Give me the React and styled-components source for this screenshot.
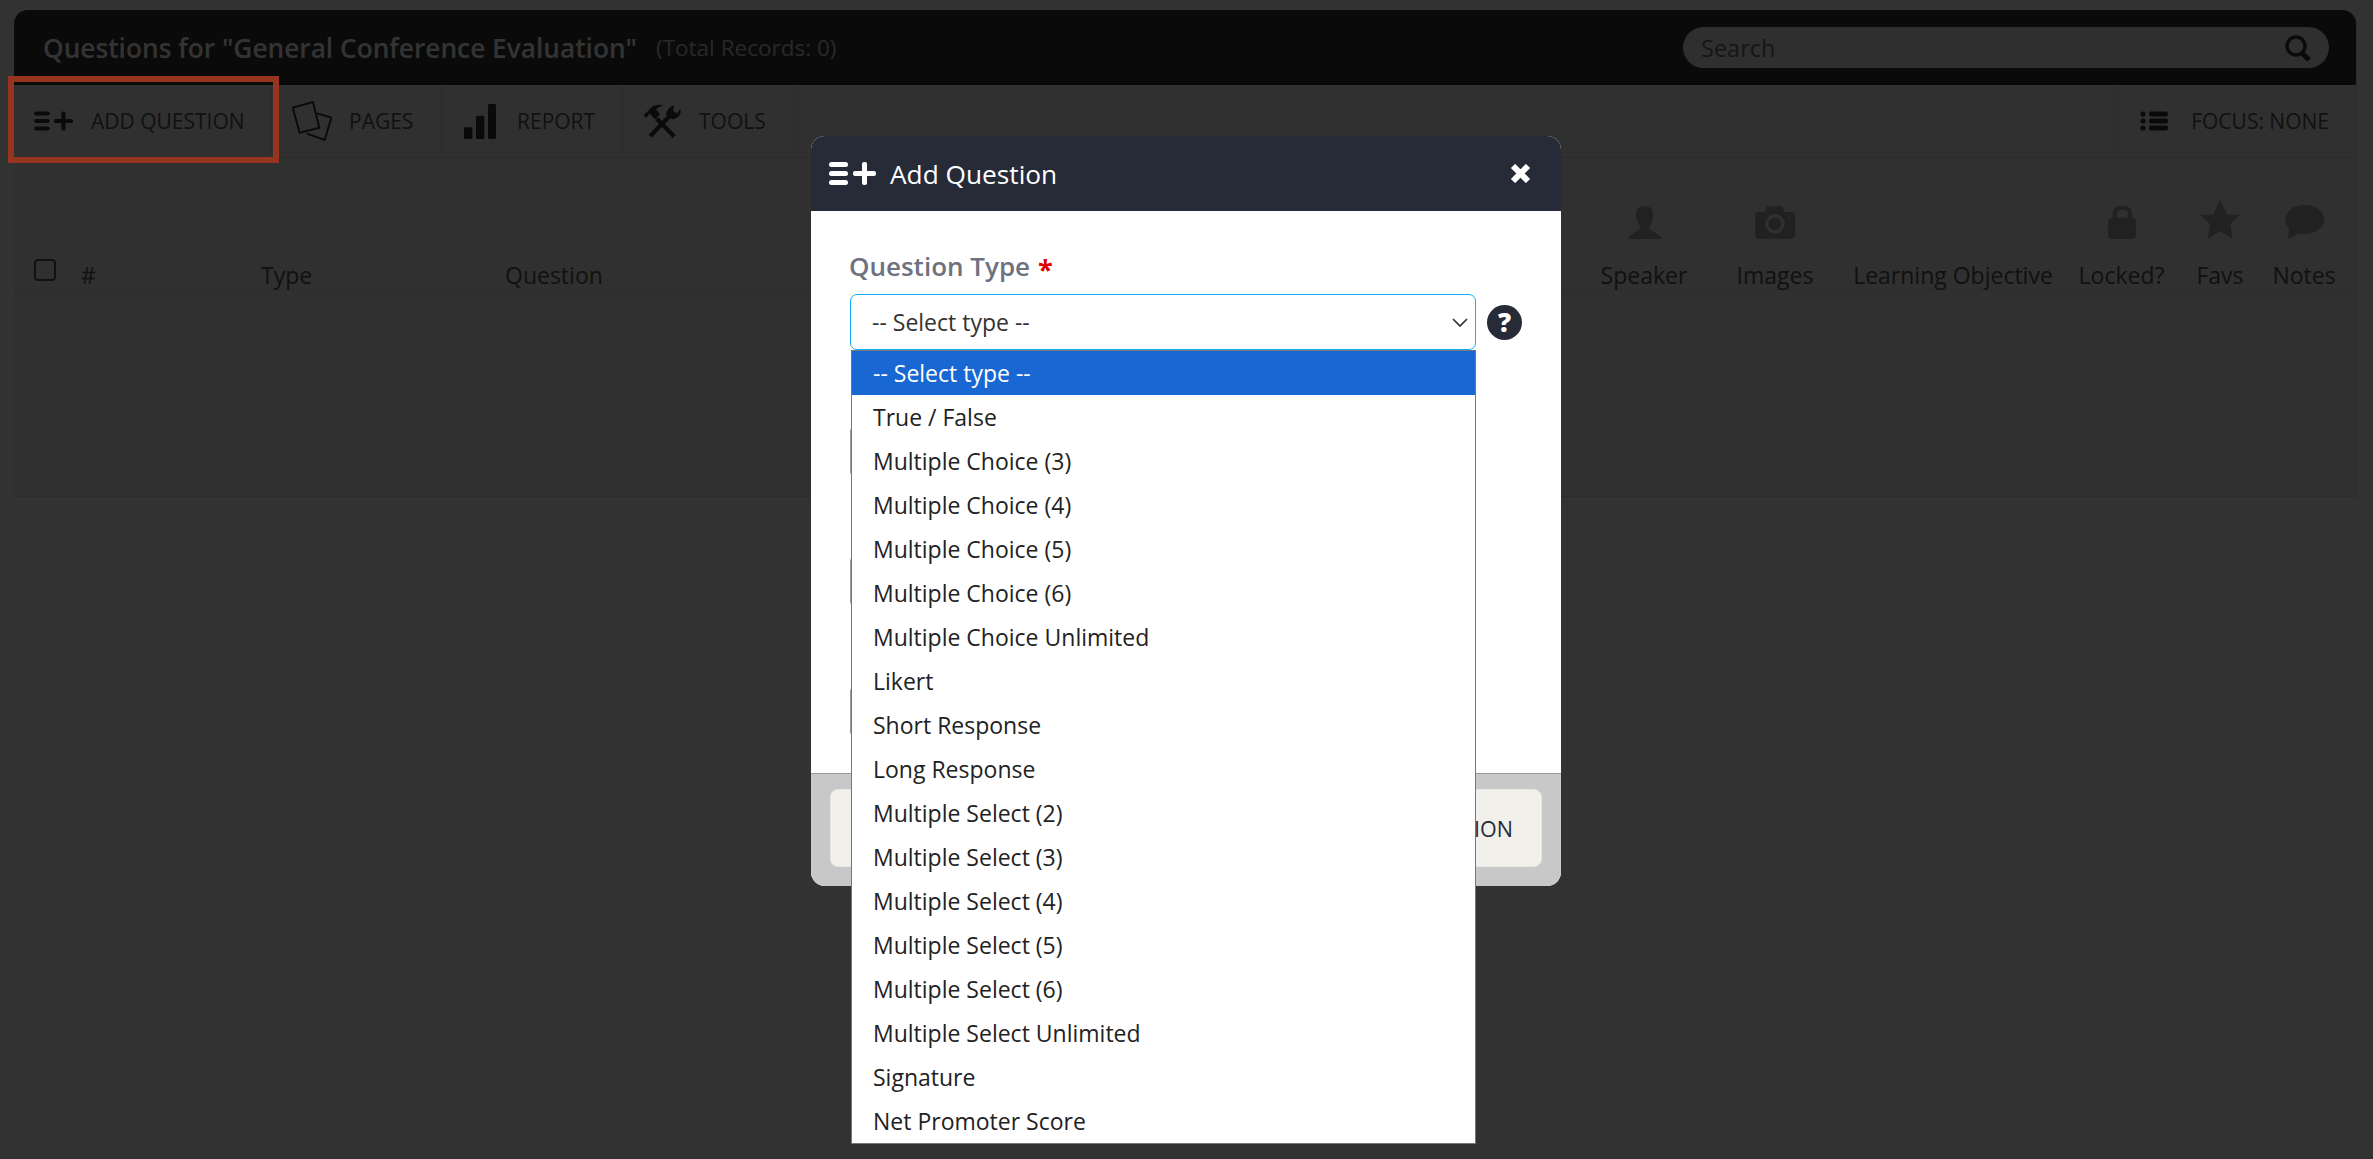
import React from 'react';
import styled, { createGlobalStyle } from 'styled-components';

const OPTIONS = [
  '-- Select type --',
  'True / False',
  'Multiple Choice (3)',
  'Multiple Choice (4)',
  'Multiple Choice (5)',
  'Multiple Choice (6)',
  'Multiple Choice Unlimited',
  'Likert',
  'Short Response',
  'Long Response',
  'Multiple Select (2)',
  'Multiple Select (3)',
  'Multiple Select (4)',
  'Multiple Select (5)',
  'Multiple Select (6)',
  'Multiple Select Unlimited',
  'Signature',
  'Net Promoter Score',
];

const GlobalStyle = createGlobalStyle`
  html, body {
    margin: 0;
    background: #fafafa;
    font-family: "Open Sans", "Liberation Sans", sans-serif;
  }
  * { box-sizing: border-box; }
`;

const Page = styled.div`
  min-height: 100vh;
  padding: 10px 16px 0 14px;
`;

const Panel = styled.div`
  height: 487px;
  background: #eeeeee;
  border-radius: 14px 14px 0 0;
  border-right: 1px solid #dcdcdc;
  border-bottom: 1px solid #dcdcdc;
`;

const PanelHeader = styled.header`
  height: 75px;
  display: flex;
  align-items: center;
  padding: 0 27px 0 29px;
  background: #323232;
  border-radius: 14px 14px 0 0;
`;

const Title = styled.h1`
  margin: 0;
  font-size: 26.25px;
  font-weight: 600;
  color: #fff;
`;

const RecordCount = styled.span`
  margin-left: 19px;
  font-size: 22.5px;
  color: #c8c8c8;
`;

const SearchBox = styled.div`
  margin-left: auto;
  width: 646px;
  height: 41px;
  display: flex;
  align-items: center;
  background: #e8e8e8;
  border-radius: 21px;
`;

const SearchText = styled.span`
  flex: 1;
  padding-left: 18px;
  font-size: 23.5px;
  color: #707070;
`;

const SearchButton = styled.span`
  width: 64px;
  height: 100%;
  display: flex;
  align-items: center;
  justify-content: center;
  border-left: 1px solid #dedede;
`;

const Toolbar = styled.nav`
  height: 73px;
  display: flex;
  border-bottom: 1px solid #d8d8d8;
`;

const ToolItem = styled.div`
  width: ${(p) => p.$width}px;
  display: flex;
  align-items: center;
  gap: 17px;
  padding-left: 20px;
  border-right: 1px solid #dcdcdc;
  font-size: 21px;
  color: #555;
`;

const FocusItem = styled(ToolItem)`
  width: auto;
  margin-left: auto;
  gap: 23px;
  padding: 0 27px 0 25px;
  border-right: 0;
  border-left: 1px solid #dcdcdc;
`;

const Icon = styled.svg`
  display: block;
  flex: none;
  margin: ${(p) => p.$margin || '0'};
`;

const ToolIcon = styled(Icon)`
  color: #333;
`;

// call-out drawn over the screenshot, above the dimmed layer
const Highlight = styled.div`
  position: fixed;
  left: 8px;
  top: 76px;
  width: 271px;
  height: 87px;
  border: 6px solid #96341f;
`;

const TableHead = styled.div`
  height: 132px;
  display: flex;
  padding-right: 10px;
  border-bottom: 1px solid #dcdcdc;
`;

const HeadCell = styled.div`
  flex: ${(p) => (p.$width ? 'none' : '1')};
  width: ${(p) => (p.$width ? `${p.$width}px` : 'auto')};
  display: flex;
  flex-direction: column;
  justify-content: flex-end;
  align-items: ${(p) => (p.$center ? 'center' : 'flex-start')};
  font-size: 23px;
  line-height: 28px;
  color: #555;
  white-space: nowrap;
`;

const HeadIcon = styled.svg`
  display: block;
  margin-bottom: 22px;
  color: #a4a4a4;
`;

const CheckBox = styled.span`
  width: 22px;
  height: 22px;
  margin: 0 0 8px 20px;
  border: 2px solid #555;
  border-radius: 4px;
`;

const Overlay = styled.div`
  position: fixed;
  inset: 0;
  display: flex;
  justify-content: center;
  align-items: flex-start;
  padding: 136px 1px 0 0;
  background: rgba(0, 0, 0, 0.8);
`;

const Modal = styled.section`
  width: 750px;
  border-radius: 14px;
  background: #fff;
`;

const ModalHeader = styled.header`
  height: 75px;
  display: flex;
  align-items: center;
  padding: 0 30px 0 18px;
  background: #272b38;
  border-radius: 14px 14px 0 0;
  color: #fff;
`;

const ModalTitle = styled.h2`
  margin: 0 0 0 14px;
  font-size: 26.25px;
  font-weight: 400;
`;

const CloseIcon = styled(Icon)`
  margin-left: auto;
`;

const ModalBody = styled.div`
  padding: 39px 39px 37px;
`;

const FieldLabel = styled.div`
  margin: 0 0 12px -1px;
  font-size: 26px;
  line-height: 32px;
  font-weight: 600;
  color: #6d7280;
`;

const Required = styled.span`
  margin-left: 8px;
  font-size: 27px;
  font-weight: 700;
  line-height: 0;
  vertical-align: -3px;
  color: #e00000;
`;

const SelectRow = styled.div`
  display: flex;
  align-items: center;
  gap: 11px;
`;

const SelectWrap = styled.div`
  position: relative;
  width: 627px;
`;

const SelectBox = styled.div`
  height: 56px;
  display: flex;
  align-items: center;
  justify-content: space-between;
  padding: 0 7px 0 21px;
  border: 1px solid #14b0f5;
  border-radius: 7px;
  font-size: 23px;
  color: #333;
`;

const OptionList = styled.ul`
  position: absolute;
  z-index: 2;
  top: 100%;
  left: 1px;
  right: 0;
  margin: 0;
  padding: 0;
  list-style: none;
  background: #fff;
  border: 1px solid #767676;
`;

const Option = styled.li`
  height: 44px;
  padding-left: 21px;
  font-size: 23px;
  line-height: 45px;
  color: ${(p) => (p.$selected ? '#fff' : '#222')};
  background: ${(p) => (p.$selected ? '#1967d2' : 'transparent')};
`;

const HelpBadge = styled.span`
  width: 35px;
  height: 35px;
  flex: none;
  display: flex;
  align-items: center;
  justify-content: center;
  border-radius: 50%;
  background: #272b38;
  color: #fff;
  font-size: 26px;
  font-weight: 800;
`;

const FieldList = styled.div`
  display: flex;
  flex-direction: column;
  gap: 81px;
  margin-top: 77px;
`;

const TextField = styled.div`
  height: 49px;
  width: 620px;
  border: 1px solid #999;
  border-radius: 4px;
`;

const ModalFooter = styled.footer`
  display: flex;
  justify-content: space-between;
  padding: 15px 19px 19px;
  background: #c8c8c8;
  border-top: 1px solid #9a9a9a;
  border-radius: 0 0 14px 14px;
`;

const FooterButton = styled.button`
  height: 78px;
  min-width: 140px;
  padding: 1px 28px 0;
  border: 1px solid #e6e6e2;
  border-radius: 8px;
  background: #f1f0eb;
  font-family: inherit;
  font-size: 21.5px;
  color: #272b38;
`;

const ListPlusIcon = ({ width, height, margin }) => (
  <Icon $margin={margin} width={width} height={height} viewBox="0 0 47 23" fill="currentColor">
    <rect x="0" y="0" width="19" height="5" rx="2.5" />
    <rect x="0" y="9" width="19" height="5" rx="2.5" />
    <rect x="0" y="18" width="19" height="5" rx="2.5" />
    <rect x="24" y="9" width="23" height="5" rx="2" />
    <rect x="33" y="0" width="5" height="23" rx="2" />
  </Icon>
);

const AddQuestionIcon = styled.span`
  display: block;
  margin-right: 1px;
  color: #333;
`;

const App = () => (
  <>
    <GlobalStyle />
    <Page>
      <Panel>
        <PanelHeader>
          <Title>Questions for "General Conference Evaluation"</Title>
          <RecordCount>(Total Records: 0)</RecordCount>
          <SearchBox>
            <SearchText>Search</SearchText>
            <SearchButton>
              <svg width="28" height="26" viewBox="0 0 28 26" fill="none" stroke="#333">
                <circle cx="12" cy="11" r="9" strokeWidth="3.5" />
                <path d="M18 18 L25 25" strokeWidth="5" />
              </svg>
            </SearchButton>
          </SearchBox>
        </PanelHeader>

        <Toolbar>
          <ToolItem $width={258}>
            <AddQuestionIcon>
              <ListPlusIcon width={39} height={20} />
            </AddQuestionIcon>
            ADD QUESTION
          </ToolItem>
          <ToolItem $width={170}>
            <ToolIcon width="40" height="40" viewBox="35 35 120 120" fill="none" stroke="currentColor" strokeWidth="6">
              <path d="M37 55 L98 38 L117 115 L58 130 Z" />
              <path d="M110 72 L153 85 L133 152 L80 133" />
            </ToolIcon>
            PAGES
          </ToolItem>
          <ToolItem $width={181}>
            <ToolIcon $margin="0 4px 0 2px" width="32" height="35" viewBox="552 43 96 105" fill="currentColor">
              <rect x="552" y="113" width="25" height="35" rx="4" />
              <rect x="588" y="78" width="25" height="70" rx="4" />
              <rect x="624" y="43" width="24" height="105" rx="4" />
            </ToolIcon>
            REPORT
          </ToolItem>
          <ToolItem $width={172}>
            <ToolIcon width="39" height="37" viewBox="1088 42 120 110" fill="currentColor">
              <path d="M1130 88 L1184 143" stroke="currentColor" strokeWidth="13" />
              <path d="M1090 78 L1118 50 Q1135 42 1150 47 L1128 58 L1140 75 L1125 90 L1108 72 L1098 86 Z" />
              <path d="M1110 142 L1170 80" stroke="currentColor" strokeWidth="13" />
              <path d="M1160 80 C1158 62 1170 52 1185 47 L1180 62 L1192 72 L1203 58 C1208 75 1195 90 1178 90 Z" />
            </ToolIcon>
            TOOLS
          </ToolItem>
          <FocusItem>
            <ToolIcon width="28" height="20" viewBox="0 0 28 20" fill="currentColor">
              <circle cx="3" cy="3" r="2.6" />
              <circle cx="3" cy="10" r="2.6" />
              <circle cx="3" cy="17" r="2.6" />
              <rect x="9" y="0.5" width="19" height="5" rx="2" />
              <rect x="9" y="7.5" width="19" height="5" rx="2" />
              <rect x="9" y="14.5" width="19" height="5" rx="2" />
            </ToolIcon>
            FOCUS: NONE
          </FocusItem>
        </Toolbar>

        <TableHead>
          <HeadCell $width={67}>
            <CheckBox />
          </HeadCell>
          <HeadCell $width={180}>#</HeadCell>
          <HeadCell $width={244}>Type</HeadCell>
          <HeadCell>Question</HeadCell>
          <HeadCell $width={130} $center>
            <HeadIcon width="35" height="33" viewBox="22 35 103 100" fill="currentColor">
              <path d="M22 135 C28 118 55 112 62 100 C52 88 48 75 48 60 C48 45 58 35 74 35 C90 35 100 45 100 60 C100 75 96 88 86 100 C93 112 118 118 125 135 Z" />
            </HeadIcon>
            Speaker
          </HeadCell>
          <HeadCell $width={132} $center>
            <HeadIcon width="40" height="33" viewBox="408 36 119 96">
              <path fill="currentColor" d="M437 53 L444 36 L490 36 L497 53 L515 53 Q527 53 527 65 L527 120 Q527 132 515 132 L420 132 Q408 132 408 120 L408 65 Q408 53 420 53 Z" />
              <circle cx="467" cy="88" r="24" fill="none" stroke="#eeeeee" strokeWidth="10" />
              <circle cx="510" cy="70" r="3" fill="#eeeeee" />
            </HeadIcon>
            Images
          </HeadCell>
          <HeadCell $width={224} $center>Learning Objective</HeadCell>
          <HeadCell $width={113} $center>
            <HeadIcon width="28" height="33" viewBox="55 37 83 98">
              <path fill="none" stroke="currentColor" strokeWidth="13" d="M75 80 L75 60 C75 35 120 35 120 60 L120 80" />
              <rect x="55" y="72" width="83" height="63" rx="11" fill="currentColor" />
            </HeadIcon>
            Locked?
          </HeadCell>
          <HeadCell $width={84} $center>
            <HeadIcon width="40" height="39" viewBox="333 18 120 117" fill="currentColor">
              <polygon points="393,18 415,62 453,62 424,90 431,135 393,112 357,135 363,90 333,62 372,62" />
            </HeadIcon>
            Favs
          </HeadCell>
          <HeadCell $width={84} $center>
            <HeadIcon width="39" height="34" viewBox="588 32 117 103" fill="currentColor">
              <ellipse cx="647" cy="76" rx="59" ry="44" />
              <path d="M600 95 L597 135 L640 112 Z" />
            </HeadIcon>
            Notes
          </HeadCell>
        </TableHead>
      </Panel>
    </Page>

    <Overlay>
      <Modal>
        <ModalHeader>
          <ListPlusIcon width={47} height={23} />
          <ModalTitle>Add Question</ModalTitle>
          <CloseIcon width="21" height="19" viewBox="0 0 21 19" stroke="#fff" strokeWidth="6">
            <path d="M3 2 L18 17 M18 2 L3 17" />
          </CloseIcon>
        </ModalHeader>
        <ModalBody>
          <FieldLabel>
            Question Type<Required>*</Required>
          </FieldLabel>
          <SelectRow>
            <SelectWrap>
              <SelectBox>
                -- Select type --
                <svg width="16" height="9" viewBox="0 0 16 9" fill="none" stroke="#333" strokeWidth="1.7">
                  <path d="M1 1 L8 8 L15 1" />
                </svg>
              </SelectBox>
              <OptionList>
                {OPTIONS.map((label, i) => (
                  <Option key={label} $selected={i === 0}>{label}</Option>
                ))}
              </OptionList>
            </SelectWrap>
            <HelpBadge>?</HelpBadge>
          </SelectRow>
          <FieldList>
            <TextField />
            <TextField />
            <TextField />
          </FieldList>
        </ModalBody>
        <ModalFooter>
          <FooterButton />
          <FooterButton>ADD QUESTION</FooterButton>
        </ModalFooter>
      </Modal>
    </Overlay>
    <Highlight />
  </>
);

export default App;
